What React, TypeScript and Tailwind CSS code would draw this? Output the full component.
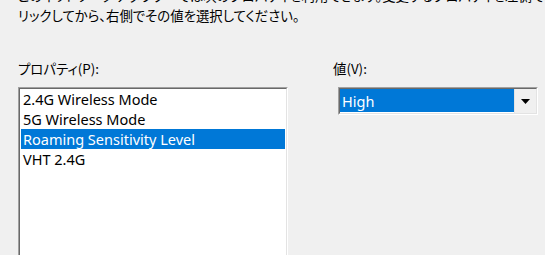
import React from "react";

const font = { fontFamily: '"Noto Sans", "Noto Sans CJK JP", sans-serif' };
const jp = { fontFamily: '"Noto Sans CJK JP", sans-serif', fontFeatureSettings: '"palt"' };

export default function App() {
  const rows = ["2.4G Wireless Mode", "5G Wireless Mode", "Roaming Sensitivity Level", "VHT 2.4G"];
  return (
    <div className="w-[545px] h-[255px] overflow-hidden bg-[#f0f0f0] text-[14.5px] text-black" style={font}>
      <div className="pl-[18px] mt-[-15px] leading-[20px] whitespace-nowrap text-[13.4px]" style={jp}>
        <div>このネットワーク アダプターでは次のプロパティを利用できます。変更するプロパティを左側でク</div>
        <div>リックしてから、右側でその値を選択してください。</div>
      </div>
      <div className="flex mt-[33px]">
        <div className="ml-[18px] w-[270px] flex flex-col">
          <div className="h-[20px] leading-[20px] text-[13.4px]" style={jp}>プロパティ(P):</div>
          <div className="mt-[9px] h-[200px] border-t border-l border-[#a0a0a0] border-r-white border-b-white border-r border-b">
            <div className="h-full border-t border-l border-[#696969] border-r border-b border-r-[#e3e3e3] border-b-[#e3e3e3] bg-white px-[1px]">
              {rows.map((r, i) => (
                <div
                  key={r}
                  className={
                    "h-[20px] leading-[20px] pl-[2px] whitespace-nowrap " +
                    (i === 2 ? "bg-[#0078d7] text-white" : "text-black")
                  }
                >
                  {r}
                </div>
              ))}
            </div>
          </div>
        </div>
        <div className="ml-[45px] flex flex-col">
          <div className="h-[20px] leading-[20px] text-[13.4px]" style={jp}>値(V):</div>
          <div className="mt-[9px] ml-[5px] w-[200px] h-[28px] border-t border-l border-[#a0a0a0] border-r-white border-b-white border-r border-b">
            <div className="h-full border-t border-l border-[#696969] border-r border-b border-r-[#e3e3e3] border-b-[#e3e3e3] bg-white flex">
              <div className="flex-1 bg-[#0078d7] text-white leading-[24px] pl-[2px] mb-[1px]">High</div>
              <div className="w-[22px] bg-[#f0f0f0] border-l border-[#e3e3e3] flex items-center justify-center">
                <svg width="9" height="5" viewBox="0 0 9 5">
                  <path d="M0 0 H9 L4.5 5 Z" fill="#000" />
                </svg>
              </div>
            </div>
          </div>
        </div>
      </div>
    </div>
  );
}
